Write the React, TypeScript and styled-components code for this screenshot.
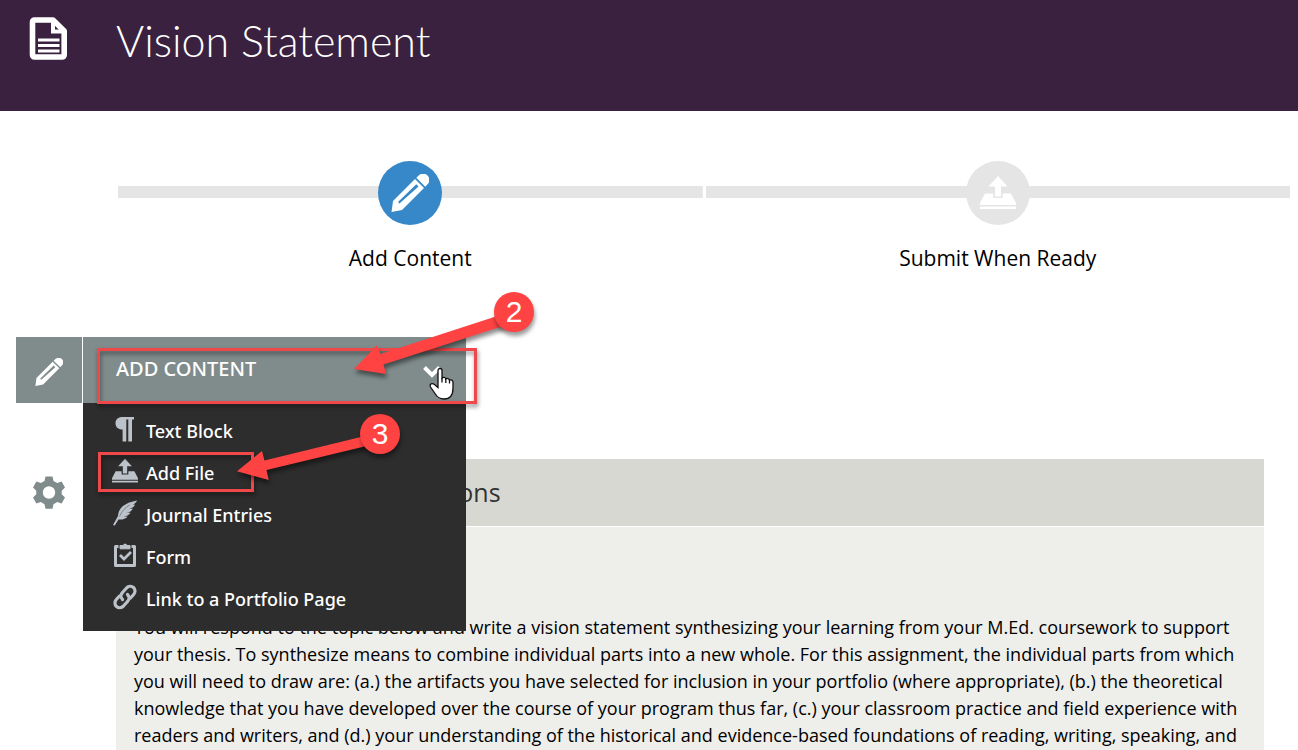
import React from "react";
import styled, { createGlobalStyle } from "styled-components";

const GlobalStyle = createGlobalStyle`
  * { box-sizing: border-box; }
  body { margin: 0; background: #fff; color: #000; font-family: "Open Sans", "Noto Sans", sans-serif; }
  h1, h2, p, ul, ol { margin: 0; padding: 0; }
  ul, ol { list-style: none; }
  svg { display: block; }
`;

const Page = styled.div`
  display: flex;
  flex-direction: column;
  min-height: 100vh;
`;

const Header = styled.header`
  display: flex;
  align-items: flex-start;
  flex: none;
  gap: 48px;
  height: 111px;
  padding: 16px 29px;
  background: #39213f;
  color: #fff;
`;

const Title = styled.h1`
  font-family: Lato, sans-serif;
  font-weight: 300;
  font-size: 43px;
  line-height: 50px;
`;

const Steps = styled.ol`
  display: grid;
  grid-template-columns: 1fr 1fr;
  flex: none;
  gap: 3px;
  padding: 50px 8px 0 118px;
`;

const Step = styled.li`
  display: flex;
  flex-direction: column;
  align-items: center;
  gap: 19px;
  height: 176px;
  font-size: 21px;
  line-height: 28px;
`;

const Track = styled.div`
  display: flex;
  justify-content: center;
  align-items: center;
  width: 100%;
  height: 64px;
  background: linear-gradient(#e5e5e5, #e5e5e5) center 25px / 100% 12px no-repeat;
`;

const StepDot = styled.span<{ $active?: boolean }>`
  display: grid;
  place-items: center;
  width: 64px;
  height: 64px;
  border-radius: 50%;
  background: ${(p) => (p.$active ? "#3688c8" : "#e5e5e5")};
  color: #fff;
`;

const Workspace = styled.main`
  position: relative;
  display: grid;
  grid-template-columns: 66px minmax(0, 1fr);
  grid-template-rows: 66px 1fr;
  column-gap: 1px;
  flex: 1;
  padding: 0 34px 0 16px;
`;

const EditButton = styled.button`
  display: grid;
  place-items: center;
  border: 0;
  padding: 4px 0 0;
  background: #7f8c8b;
  color: #fff;
`;

const SettingsButton = styled.button`
  display: grid;
  justify-content: center;
  align-content: start;
  border: 0;
  padding: 73px 0 0;
  background: none;
  color: #7f8c8b;
`;

const MenuHost = styled.div`
  position: relative;
  width: 383px;
`;

const MenuButton = styled.button`
  display: flex;
  justify-content: space-between;
  align-items: center;
  width: 100%;
  height: 66px;
  border: 0;
  padding: 0 24px 2px 33px;
  background: #7f8c8b;
  color: #fff;
  font: 500 20px/26px "Noto Sans", sans-serif;
`;

const Menu = styled.ul`
  position: absolute;
  z-index: 1;
  top: 66px;
  left: 0;
  width: 100%;
  padding: 6px 0 12px;
  background: #2d2d2d;
`;

const MenuLink = styled.a`
  display: flex;
  align-items: center;
  gap: 8px;
  height: 42px;
  padding: 0 29px;
  color: #fff;
  font: 500 18px/26px "Noto Sans", sans-serif;
  text-decoration: none;
  svg {
    margin-bottom: 2px;
    color: #bcc2c9;
  }
`;

const MenuLabel = styled.span`
  padding-top: 2px;
`;

const Panel = styled.section`
  display: flex;
  flex-direction: column;
  margin: 56px 0 0 33px;
`;

const PanelTitle = styled.h2`
  border-bottom: 1px solid #fff;
  padding: 17px 18px;
  background: #d8d8d3;
  color: #333;
  font-weight: 400;
  font-size: 25px;
  line-height: 33px;
`;

const PanelBody = styled.p`
  flex: 1;
  padding: 87px 18px 0;
  background: #eeeeeb;
  font-size: 18px;
  line-height: 27px;
  white-space: nowrap;
`;

const Overlay = styled.div`
  position: absolute;
  z-index: 2;
  inset: 0;
  overflow: hidden;
  pointer-events: none;
`;

const Highlight = styled.span<{ $x: number; $y: number; $w: number; $h: number }>`
  position: absolute;
  left: ${(p) => p.$x}px;
  top: ${(p) => p.$y}px;
  width: ${(p) => p.$w}px;
  height: ${(p) => p.$h}px;
  border: 3px solid #ee484b;
  filter: drop-shadow(1px 3px 2px rgba(0, 0, 0, 0.45));
`;

const Arrows = styled.svg`
  position: absolute;
  z-index: 2;
  left: 0;
  top: -40px;
  fill: #ff4242;
  filter: drop-shadow(1px 4px 2px rgba(0, 0, 0, 0.45));
  pointer-events: none;
`;

const Badge = styled.span<{ $x: number; $y: number }>`
  position: absolute;
  z-index: 3;
  left: ${(p) => p.$x}px;
  top: ${(p) => p.$y}px;
  width: 40px;
  height: 40px;
  border-radius: 50%;
  background: #ff4242;
  box-shadow: 1px 4px 4px rgba(0, 0, 0, 0.4);
  color: #fff;
  font: 30px/40px "Liberation Sans", Arial, sans-serif;
  text-align: center;
`;

const Cursor = styled.svg`
  position: absolute;
  z-index: 3;
  left: 429px;
  top: 30px;
  pointer-events: none;
`;

const DocIcon = () => (
  <svg width="39" height="45" viewBox="0 0 39 45" fill="none" stroke="currentColor" aria-hidden="true">
    <path d="M5.500 4h18.500L35.200 15V39a2 2 0 0 1-2 2H5.500a2 2 0 0 1-2-2V6a2 2 0 0 1 2-2z" strokeWidth="5.600" strokeLinejoin="round" />
    <path d="M24 4v11.500H35" strokeWidth="4" />
    <path d="M9 24h21.500M9 29.500h21.500M9 35h21.500" strokeWidth="3.200" />
  </svg>
);

const PencilIcon = ({ size }: { size: number }) => (
  <svg width={size} height={size} viewBox="0 0 38 38" fill="currentColor" aria-hidden="true">
    <path fillRule="evenodd" d="M0.500 38 2 27 24 5l9 9L11 36zM8.500 29.500 27.500 12.500l-2.200-2.200L7 28z" />
    <path d="M25.300 3.700 27.700 1.500a6 6 0 0 1 8.800 8.800L34.300 12.700z" />
  </svg>
);

const UploadIcon = ({ width }: { width: number }) => (
  <svg width={width} height={width} viewBox="0 0 36 36" fill="currentColor" aria-hidden="true">
    <path d="M18 1 27.500 11.500H21V21.500h-6V11.500H8.500z" />
    <path d="M5 18.500h8.300V23h9.400v-4.500H31L36 28v2H0v-2zM0 31.500h36V34H0z" />
  </svg>
);

const GearIcon = () => (
  <svg width="32" height="33" viewBox="-16 -16.500 32 33" fill="currentColor" aria-hidden="true">
    <path
      fillRule="evenodd"
      d="M-3.500-16h7l1 4.500 3.700 2.100L12.600-11 16-5l-3.300 3.200v3.600L16 5l-3.400 6-4.400-1.400-3.700 2.100-1 4.500h-7l-1-4.500-3.700-2.100L-12.600 11-16 5l3.300-3.200v-3.600L-16-5l3.400-6 4.400 1.600 3.700-2.100zM0-6.200a6.200 6.200 0 1 0 0 12.400 6.200 6.200 0 1 0 0-12.400z"
    />
  </svg>
);

const ParagraphIcon = () => (
  <svg width="26" height="26" viewBox="0 0 26 26" fill="currentColor" aria-hidden="true">
    <path d="M10.500 1H22v2.500h-2V25.500h-3.700V3.500h-2V25.500h-3.700V13.500C6 13.500 3.500 11 3.500 7.200S6 1 10.500 1z" />
  </svg>
);

const FeatherIcon = () => (
  <svg width="26" height="26" viewBox="0 0 26 26" fill="currentColor" aria-hidden="true">
    <path d="M25 .5C14 2.500 6.500 7 6 16L1 25l1.800.6L6.500 19.500c4 .4 7-.5 9-3l-4-.1c3-.2 5.500-1.400 7-3.700l-4-.1c3-.4 5.200-1.600 6.300-3.900l-3.500-.1C20.300 8 22.300 7 23 4.600l-2.300.1C22.700 4 24.200 2.600 25 .5z" />
    <path d="M7.500 16.500C9.500 11.500 13 7.500 18 4.800" fill="none" stroke="#2d2d2d" strokeWidth=".4" />
  </svg>
);

const FormIcon = () => (
  <svg width="26" height="26" viewBox="0 0 26 26" fill="none" stroke="currentColor" aria-hidden="true">
    <path d="M6.500 4.500H3.500V23.500H22.500V4.500H19.500" strokeWidth="3" strokeLinejoin="round" />
    <path d="M8 6.800V3.500h3.200a2 2 0 0 1 3.800 0H18v3.300z" fill="currentColor" strokeWidth="1" />
    <path d="M8 13l4 4 7-7" strokeWidth="2.800" />
  </svg>
);

const LinkIcon = () => (
  <svg width="26" height="26" viewBox="0 0 26 26" fill="none" stroke="currentColor" strokeWidth="3.200" strokeLinecap="round" aria-hidden="true">
    <path d="M10.500 15.500c-2-2-2-5 0-7l4-4.500c2-2 5-2.200 7-.5s2 5 .2 7L18.500 14" />
    <path d="M15.500 10.500c2 2 2 5 0 7l-4 4.500c-2 2-5 2.200-7 .5s-2-5-.2-7L7.500 12" />
  </svg>
);

const ChevronIcon = () => (
  <svg width="20" height="10" viewBox="0 0 20 10" fill="none" stroke="currentColor" strokeWidth="4" overflow="visible" aria-hidden="true">
    <path d="M2.500 3.500 10 11l7.500-7.500" />
  </svg>
);

const menuItems = [
  { label: "Text Block", icon: <ParagraphIcon /> },
  { label: "Add File", icon: <UploadIcon width={26} /> },
  { label: "Journal Entries", icon: <FeatherIcon /> },
  { label: "Form", icon: <FormIcon /> },
  { label: "Link to a Portfolio Page", icon: <LinkIcon /> },
];

export default function App() {
  return (
    <Page>
      <GlobalStyle />
      <Header>
        <DocIcon />
        <Title>Vision Statement</Title>
      </Header>
      <Steps>
        <Step>
          <Track>
            <StepDot $active>
              <PencilIcon size={38} />
            </StepDot>
          </Track>
          Add Content
        </Step>
        <Step>
          <Track>
            <StepDot>
              <UploadIcon width={36} />
            </StepDot>
          </Track>
          Submit When Ready
        </Step>
      </Steps>
      <Workspace>
        <EditButton aria-label="Edit">
          <PencilIcon size={28} />
        </EditButton>
        <MenuHost>
          <MenuButton aria-expanded="true">
            ADD CONTENT
            <ChevronIcon />
          </MenuButton>
          <Menu>
            {menuItems.map((item) => (
              <li key={item.label}>
                <MenuLink href="#">
                  {item.icon}
                  <MenuLabel>{item.label}</MenuLabel>
                </MenuLink>
              </li>
            ))}
          </Menu>
        </MenuHost>
        <SettingsButton aria-label="Settings">
          <GearIcon />
        </SettingsButton>
        <Panel>
          <PanelTitle>Vision Statement &amp; Instructions</PanelTitle>
          <PanelBody>
            You will respond to the topic below and write a vision statement synthesizing your learning from your M.Ed. coursework to support
            <br />
            your thesis. To synthesize means to combine individual parts into a new whole. For this assignment, the individual parts from which
            <br />
            you will need to draw are: (a.) the artifacts you have selected for inclusion in your portfolio (where appropriate), (b.) the theoretical
            <br />
            knowledge that you have developed over the course of your program thus far, (c.) your classroom practice and field experience with
            <br />
            readers and writers, and (d.) your understanding of the historical and evidence-based foundations of reading, writing, speaking, and
          </PanelBody>
        </Panel>
        <Overlay>
          <Highlight $x={97} $y={11} $w={380} $h={56} />
          <Highlight $x={98} $y={115} $w={156} $h={40} />
        </Overlay>
        <Arrows width="560" height="200" viewBox="0 297 560 200" aria-hidden="true">
          <path d="M354 369 377 345.300 380.500 354 508 312.500 511 323.500 383.500 364.500 386 374z" />
          <path d="M237 471.300 262 451 264.500 460.500 375 433.500 377 443.500 266.500 470 268.700 480z" />
        </Arrows>
        <Badge $x={494} $y={-45}>2</Badge>
        <Badge $x={360} $y={77}>3</Badge>
        <Cursor width="26" height="34" viewBox="0 0 26 34" aria-hidden="true">
          <path
            d="M9 3.500C9 .8 13 .8 13 3.500V11c1-1 3.500-.8 3.800 1 1.200-1 3.400-.6 3.700 1.100 1.600-.7 3.500 0 3.500 2.400V21c0 7-3 11-9 11-5 0-7-2-9-5.500L1.500 20c-1.300-3 1.500-4.500 4-2.500L9 20.500z"
            fill="#fff"
            stroke="#111"
            strokeWidth="1.300"
          />
          <path d="M13 11v4.500M16.800 12v4M20.500 13v3.500" stroke="#111" strokeWidth="1.300" />
        </Cursor>
      </Workspace>
    </Page>
  );
}
